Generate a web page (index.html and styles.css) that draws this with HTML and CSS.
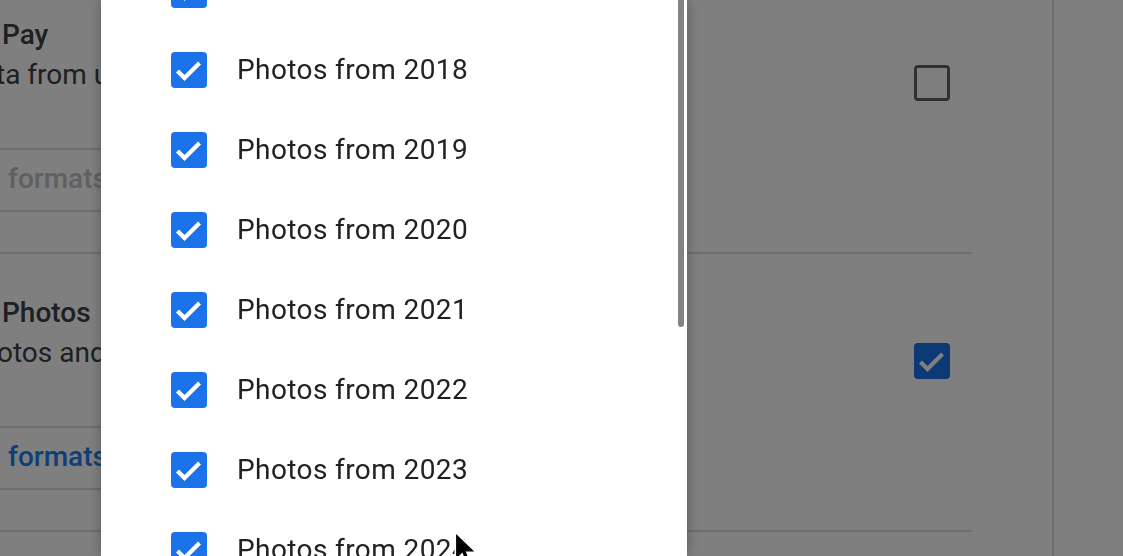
FILE: index.html
```html
<!DOCTYPE html>
<html lang="en">
<head>
  <meta charset="utf-8">
  <title>Export settings</title>
  <link rel="stylesheet" href="styles.css">
</head>
<body>
  <div class="page">
    <main class="settings">
      <!-- Google Pay -->
      <section class="setting">
        <div class="setting-head">
          <div class="setting-text">
            <div class="setting-title">Pay</div>
            <div class="setting-desc"><span class="cut-t">ta from users</span></div>
          </div>
          <span class="box"></span>
        </div>
        <div class="formats"><span class="formats-label">formats</span></div>
      </section>

      <!-- Google Photos -->
      <section class="setting">
        <div class="setting-head">
          <div class="setting-text">
            <div class="setting-title">Photos</div>
            <div class="setting-desc"><span class="cut-o">otos and videos</span></div>
          </div>
          <span class="box box-on">
            <svg viewBox="0 0 36 36"><polyline points="6.5,19 13.5,26 28.5,11"/></svg>
          </span>
        </div>
        <div class="formats"><span class="formats-label formats-on">formats</span></div>
      </section>
    </main>
    <aside class="side"></aside>
  </div>

  <div class="scrim"></div>

  <!-- Album picker -->
  <div class="dialog">
    <ul class="album-list">
      <li class="album"><span class="check"><svg viewBox="0 0 36 36"><polyline points="6.5,19 13.5,26 28.5,11"/></svg></span><span class="album-name">Photos from 2017</span></li>
      <li class="album"><span class="check"><svg viewBox="0 0 36 36"><polyline points="6.5,19 13.5,26 28.5,11"/></svg></span><span class="album-name">Photos from 2018</span></li>
      <li class="album"><span class="check"><svg viewBox="0 0 36 36"><polyline points="6.5,19 13.5,26 28.5,11"/></svg></span><span class="album-name">Photos from 2019</span></li>
      <li class="album"><span class="check"><svg viewBox="0 0 36 36"><polyline points="6.5,19 13.5,26 28.5,11"/></svg></span><span class="album-name">Photos from 2020</span></li>
      <li class="album"><span class="check"><svg viewBox="0 0 36 36"><polyline points="6.5,19 13.5,26 28.5,11"/></svg></span><span class="album-name">Photos from 2021</span></li>
      <li class="album"><span class="check"><svg viewBox="0 0 36 36"><polyline points="6.5,19 13.5,26 28.5,11"/></svg></span><span class="album-name">Photos from 2022</span></li>
      <li class="album"><span class="check"><svg viewBox="0 0 36 36"><polyline points="6.5,19 13.5,26 28.5,11"/></svg></span><span class="album-name">Photos from 2023</span></li>
      <li class="album"><span class="check"><svg viewBox="0 0 36 36"><polyline points="6.5,19 13.5,26 28.5,11"/></svg></span><span class="album-name">Photos from 2024</span></li>
    </ul>
    <div class="scroll-thumb"></div>
  </div>

  <svg class="cursor" viewBox="0 0 20 30" width="26" height="39">
    <path d="M1 1 L1 23 L6.2 17.6 L9.8 26 L13.4 24.5 L9.9 16.3 L17 16.3 Z"/>
  </svg>
</body>
</html>
```

FILE: styles.css
```css
body { margin: 0; width: 1123px; height: 556px; overflow: hidden; background: #fff; font-family: Roboto, "Liberation Sans", sans-serif; color: #3c4043; }
.page { display: flex; height: 556px; }
.settings { width: 972px; flex: none; margin-top: -24px; }
.setting { border-bottom: 2px solid #dadce0; }
.setting-head { display: flex; justify-content: space-between; align-items: flex-start; padding-top: 39px; height: 80px; }
.setting-title { font-size: 28px; line-height: 40px; font-weight: 500; padding-left: 2px; }
.setting-desc { font-size: 28px; line-height: 40px; white-space: nowrap; }
.cut-t { margin-left: -4px; }
.cut-o { margin-left: -3px; }
.box { width: 36px; height: 36px; box-sizing: border-box; border: 3px solid #5f6368; border-radius: 4px; margin-top: 50px; margin-right: 22px; flex: none; }
.box-on { border: none; background: #1a73e8; }
.box svg, .check svg { display: block; width: 36px; height: 36px; fill: none; stroke: #fff; stroke-width: 4.2; }
.formats { width: 580px; margin: 53px 0 40px; border-top: 2px solid #dadce0; border-bottom: 2px solid #dadce0; height: 60px; }
.formats-label { display: block; font-size: 28px; line-height: 58px; font-weight: 500; padding-left: 8px; color: #bdc1c6; }
.formats-on { color: #1f7ff0; }
.side { margin-left: 80px; border-left: 2px solid #dadce0; flex: 1; }

.scrim { position: fixed; inset: 0; background: rgba(0, 0, 0, 0.5); }

.dialog { position: fixed; left: 101px; top: 0; width: 586px; height: 556px; background: #fff; box-shadow: 0 0 12px rgba(0, 0, 0, 0.3); overflow: hidden; }
.album-list { list-style: none; margin: -50px 0 0; padding: 0 0 0 70px; }
.album { display: flex; align-items: center; gap: 30px; height: 80px; }
.check { width: 36px; height: 36px; border-radius: 4px; background: #1a73e8; flex: none; }
.album-name { font-size: 28px; line-height: 40px; letter-spacing: 0.4px; color: #202124; }
.scroll-thumb { position: absolute; right: 3px; top: 0; width: 6px; height: 327px; background: #818487; border-radius: 0 0 3px 3px; }

.cursor { position: fixed; left: 454px; top: 531px; fill: #000; stroke: #fff; stroke-width: 1.2; }
```
